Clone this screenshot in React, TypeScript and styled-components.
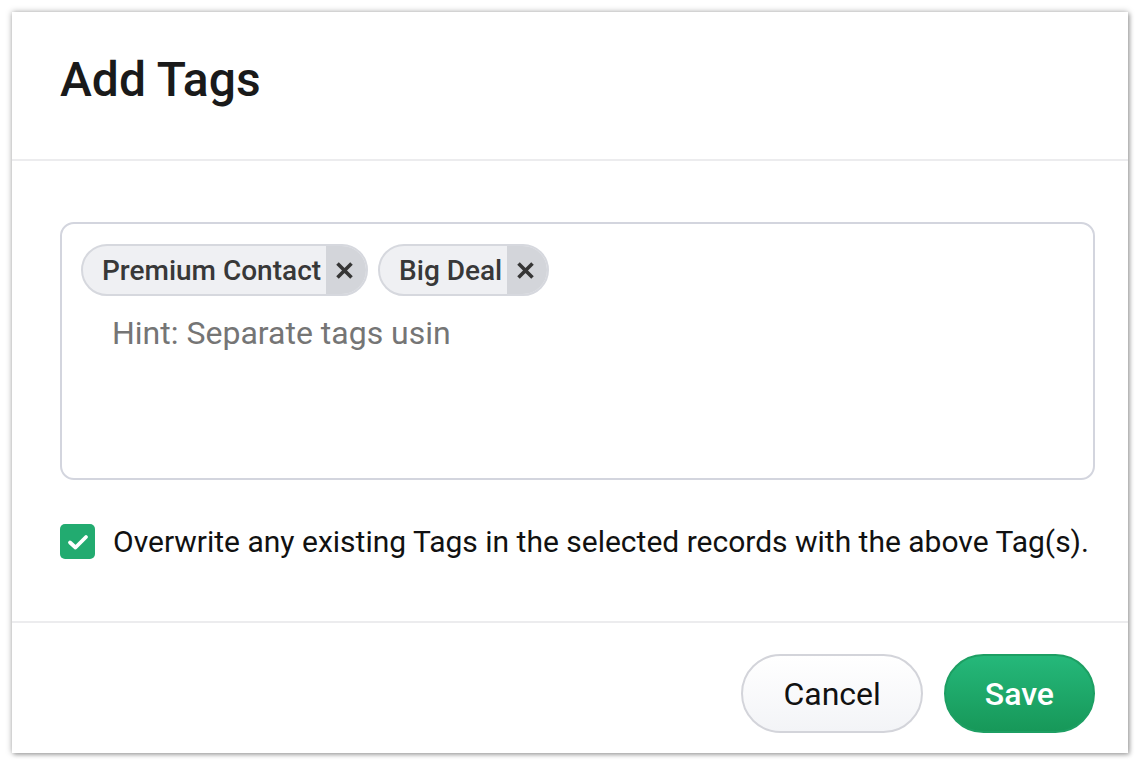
import styled, { createGlobalStyle } from 'styled-components';

const GlobalStyle = createGlobalStyle`
  html, body {
    margin: 0;
    padding: 0;
    background: #ffffff;
    font-family: Roboto, "Liberation Sans", sans-serif;
  }
`;

const Page = styled.div`
  width: 1140px;
  height: 766px;
  padding: 12px;
  box-sizing: border-box;
`;

const Dialog = styled.div`
  width: 1116px;
  height: 741px;
  background: #fff;
  box-shadow: 0 0 6px rgba(0, 0, 0, 0.35), 2px 2px 4px rgba(0, 0, 0, 0.2);
  display: flex;
  flex-direction: column;
`;

const Header = styled.div`
  height: 147px;
  border-bottom: 2px solid #ececee;
  padding: 0 48px;
  display: flex;
  align-items: center;
`;

const Title = styled.h1`
  margin: 0 0 12px;
  font-size: 48px;
  font-weight: 500;
  color: #1a1a1a;
`;

const Body = styled.div`
  flex: 1;
  padding: 61px 33px 0 48px;
  border-bottom: 2px solid #ececee;
`;

const TagBox = styled.div`
  height: 258px;
  box-sizing: border-box;
  border: 2px solid #d3d5de;
  border-radius: 14px;
  padding: 20px 19px;
`;

const TagRow = styled.div`
  display: flex;
  gap: 10px;
`;

const Tag = styled.div`
  display: flex;
  align-items: stretch;
  height: 52px;
  box-sizing: border-box;
  border: 2px solid #d6d8de;
  border-radius: 26px;
  background: #eff0f3;
  overflow: hidden;
`;

const TagLabel = styled.span`
  display: flex;
  align-items: center;
  padding: 0 5px 0 19px;
  font-size: 28px;
  font-weight: 500;
  color: #383838;
`;

const TagClose = styled.span`
  display: flex;
  align-items: center;
  justify-content: center;
  width: 40px;
  box-sizing: border-box;
  padding-right: 3px;
  background: #d3d5da;
`;

const Hint = styled.div`
  margin: 18px 0 0 31px;
  font-size: 32px;
  color: #757575;
`;

const CheckRow = styled.label`
  display: flex;
  align-items: center;
  gap: 18px;
  margin-top: 44px;
  font-size: 30px;
  color: #111;
`;

const CheckBox = styled.span`
  width: 35px;
  height: 35px;
  border-radius: 5px;
  background: #22ab70;
  display: flex;
  align-items: center;
  justify-content: center;
`;

const Footer = styled.div`
  height: 130px;
  box-sizing: border-box;
  display: flex;
  justify-content: flex-end;
  align-items: flex-start;
  gap: 21px;
  padding: 31px 33px 0 0;
`;

const Button = styled.button<{ $primary?: boolean }>`
  height: 79px;
  padding: 0 ${(p) => (p.$primary ? '39px' : '40px')};
  border-radius: 40px;
  font-family: Roboto, "Liberation Sans", sans-serif;
  font-size: 32px;
  font-weight: ${(p) => (p.$primary ? 500 : 400)};
  border: 2px solid ${(p) => (p.$primary ? '#1d9f63' : '#d3d4da')};
  color: ${(p) => (p.$primary ? '#fff' : '#111')};
  background: ${(p) =>
    p.$primary
      ? 'linear-gradient(#25b87a, #179859)'
      : 'linear-gradient(#ffffff, #f3f4f7)'};
`;

function CloseIcon() {
  return (
    <svg width="19" height="19" viewBox="0 0 19 19">
      <path d="M2.5 2.5 L16.5 16.5 M16.5 2.5 L2.5 16.5" stroke="#363636" strokeWidth="3.6" />
    </svg>
  );
}

export default function App() {
  return (
    <Page>
      <GlobalStyle />
      <Dialog>
        <Header>
          <Title>Add Tags</Title>
        </Header>
        <Body>
          <TagBox>
            <TagRow>
              <Tag>
                <TagLabel>Premium Contact</TagLabel>
                <TagClose><CloseIcon /></TagClose>
              </Tag>
              <Tag>
                <TagLabel>Big Deal</TagLabel>
                <TagClose><CloseIcon /></TagClose>
              </Tag>
            </TagRow>
            <Hint>Hint: Separate tags usin</Hint>
          </TagBox>
          <CheckRow>
            <CheckBox>
              <svg width="24" height="24" viewBox="0 0 24 24">
                <path d="M4 12.5 L9.5 17.5 L20 7" fill="none" stroke="#fff" strokeWidth="3.8" strokeLinecap="round" strokeLinejoin="round" />
              </svg>
            </CheckBox>
            Overwrite any existing Tags in the selected records with the above Tag(s).
          </CheckRow>
        </Body>
        <Footer>
          <Button>Cancel</Button>
          <Button $primary>Save</Button>
        </Footer>
      </Dialog>
    </Page>
  );
}
